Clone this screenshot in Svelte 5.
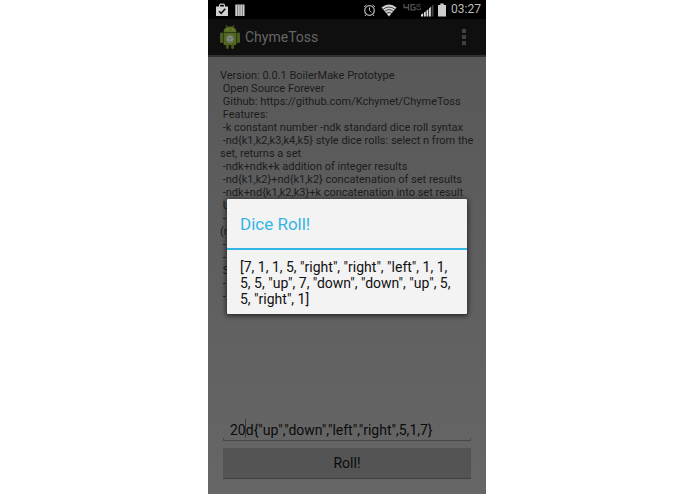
<script>
  let expression = '20d{"up","down","left","right",5,1,7}';
  let open = true;

  const result =
    '[7, 1, 1, 5, "right", "right", "left", 1, 1, 5, 5, "up", 7, "down", "down", "up", 5, 5, "right", 1]';

  const help = [
    "Version: 0.0.1 BoilerMake Prototype",
    " Open Source Forever",
    " Github: https://github.com/Kchymet/ChymeToss",
    " Features:",
    " -k constant number -ndk standard dice roll syntax",
    " -nd{k1,k2,k3,k4,k5} style dice rolls: select n from the set, returns a set",
    " -ndk+ndk+k addition of integer results",
    " -nd{k1,k2}+nd{k1,k2} concatenation of set results",
    " -ndk+nd{k1,k2,k3}+k concatenation into set result",
    " U",
    " -",
    "(r",
    " -",
    " -",
    " S",
    " -",
    " -",
  ].join("\n");

  function roll() {
    open = true;
  }
</script>

<div class="page">
  <div class="phone">
    <div class="status">
      <svg class="bag" width="14" height="14" viewBox="0 0 14 14">
        <path d="M4.5 4V2.8Q4.5 1.2 5.8 1.2H8.2Q9.5 1.2 9.5 2.8V4" fill="none" stroke="#ccc" stroke-width="1.2" />
        <path d="M1 3.5H13V13H1Z" fill="#d0d0d0" />
        <path d="M4 8.2L6.2 10.4L10.3 5.8" fill="none" stroke="#111" stroke-width="1.6" />
      </svg>
      <svg width="10" height="14" viewBox="0 0 10 14">
        <path d="M0.3 1.5H9.5V13H0.3Z" fill="#d0d0d0" />
        <path d="M2.6 1.5V13M5 1.5V13M7.4 1.5V13" stroke="#555" stroke-width="0.7" />
      </svg>
      <span class="fill"></span>
      <svg class="alarm" width="13" height="14" viewBox="0 0 13 14" fill="none" stroke="#b8b8b8">
        <circle cx="6.5" cy="7.5" r="4.8" stroke-width="1.2" />
        <path d="M6.5 4.5V7.5L8.3 9.4M1 4L3.4 1.8M12 4L9.6 1.8M3.2 11.5L2 13M9.8 11.5L11 13" />
      </svg>
      <svg class="wifi" width="16" height="14" viewBox="0 0 16 14">
        <path d="M0.5 4.6Q8 -1.4 15.5 4.6L8 13.4Z" fill="#d4d4d4" />
        <path d="M1.8 6.4Q8 1.6 14.2 6.4M3.4 8.5Q8 4.8 12.6 8.5M5 10.5Q8 8.2 11 10.5" fill="none" stroke="#222" stroke-width="0.8" />
      </svg>
      <svg class="lte" width="18" height="14" viewBox="0 0 18 14" fill="none" stroke="#505050" stroke-width="1.3">
        <path d="M1 1V4.5H5.5M5.5 1V7.5M12 1.6H8V6.8H12V4.3H10.2" />
        <path d="M14 1V3.2H17.5M15.2 1.3H17.5M14 4.5V6.6H17.5V4.5" stroke-width="0.9" />
      </svg>
      <svg class="signal" width="13" height="14" viewBox="0 0 13 14">
        <path d="M0 11.5L2.2 10.3V13.5H0ZM3 9.6L4.8 8.2V13.5H3ZM5.5 7.6L7.3 6.2V13.5H5.5ZM8 5.4L9.8 3.8V13.5H8Z" fill="#ddd" />
        <path d="M10.5 3L12.5 1.2V13.5H10.5Z" fill="#444" />
      </svg>
      <svg class="battery" width="8" height="14" viewBox="0 0 8 14">
        <path d="M2.3 0.5H5.7V2H8V13.5H0V2H2.3Z" fill="#ccc" />
      </svg>
      <span class="clock">03:27</span>
    </div>

    <div class="screen">
      <header>
        <svg class="robot" width="22" height="26" viewBox="0 0 22 26">
          <path d="M7 1L8.4 3.5M15 1L13.6 3.5" stroke="#50611f" stroke-width="1" />
          <path d="M4.5 8Q5 2.5 11 2.5T17.5 8Z" fill="#566b20" />
          <circle cx="8.2" cy="5.7" r="0.6" fill="#888" />
          <circle cx="13.8" cy="5.7" r="0.6" fill="#888" />
          <path d="M4.5 8.4H17.5V19.7Q17.5 21 16.2 21H5.8Q4.5 21 4.5 19.7Z" fill="#526820" />
          <rect x="1" y="8.6" width="3.1" height="10.4" rx="1.3" fill="#495d1c" />
          <rect x="17.9" y="8.6" width="3.1" height="10.4" rx="1.3" fill="#495d1c" />
          <path d="M6.9 20.5H9.9V24Q8.4 26 6.9 24ZM12.1 20.5H15.1V24Q13.6 26 12.1 24Z" fill="#44571a" />
          <circle cx="11" cy="14.7" r="4.2" fill="#6c7560" />
          <path d="M11 11.8L13.7 13.3V16.3L11 17.8L8.3 16.3V13.3Z" fill="#8d9088" />
          <path d="M8.3 13.3L11 14.8L13.7 13.3M11 14.8V17.8" fill="none" stroke="#5c6154" stroke-width="0.8" />
        </svg>
        <h1>ChymeToss</h1>
        <button class="more" aria-label="More options">
          <i></i><i></i><i></i>
        </button>
      </header>

      <p class="help">{help}</p>

      <form on:submit|preventDefault={roll}>
        <div class="field">
          <input type="text" aria-label="Dice expression" bind:value={expression} />
          <span class="caret"></span>
        </div>
        <button class="roll">Roll!</button>
      </form>

      {#if open}
        <div class="overlay">
          <div class="dialog" role="dialog" aria-labelledby="dialog-title">
            <h2 id="dialog-title">Dice Roll!</h2>
            <p>{result}</p>
          </div>
        </div>
      {/if}
    </div>
  </div>
</div>

<style>
  :global(body) {
    background: #fff;
    font-family: Roboto, "Liberation Sans", sans-serif;
  }

  .page {
    display: flex;
    justify-content: center;
    padding-right: 1px;
  }

  .phone {
    display: flex;
    flex-direction: column;
    width: 40vw;
    min-width: 278px;
    min-height: 100vh;
    background: #000;
  }

  .status {
    display: flex;
    align-items: center;
    height: 19px;
    padding: 0 5px 0 7px;
  }

  .bag {
    margin-right: 6px;
  }

  .fill {
    flex: 1;
  }

  .alarm {
    margin-right: 5px;
  }

  .wifi {
    margin-right: 6px;
  }

  .signal {
    margin-right: 4px;
  }

  .battery {
    margin-right: 5px;
  }

  .clock {
    color: #bbb;
    font-size: 12px;
    line-height: 21px;
  }

  .screen {
    position: relative;
    display: flex;
    flex: 1;
    flex-direction: column;
    background: linear-gradient(#575757, #666);
  }

  header {
    display: flex;
    align-items: center;
    height: 36px;
    padding: 0 16px 0 11px;
    background: #0f0f0f;
    border-bottom: 2px solid #303030;
  }

  h1 {
    flex: 1;
    margin: 0 0 0 4px;
    color: #666;
    font-size: 14px;
    font-weight: 400;
    line-height: 20px;
  }

  .more {
    display: flex;
    flex-direction: column;
    gap: 2px;
    padding: 0 4px;
    border: 0;
    background: none;
  }

  .more i {
    width: 4px;
    height: 4px;
    background: #404040;
  }

  .help {
    flex: 1;
    margin: 0;
    padding: 12px 12px 0;
    color: #1c1c1c;
    font-size: 11px;
    line-height: 13px;
    white-space: pre-wrap;
  }

  form {
    display: flex;
    flex-direction: column;
    gap: 7px;
    padding: 0 15px;
    margin-bottom: 15px;
  }

  .field {
    position: relative;
  }

  /* short end ticks of the underline */
  .field::before {
    content: "";
    position: absolute;
    inset: auto 0 0;
    height: 3px;
    border: solid #484848;
    border-width: 0 1px;
  }

  input {
    box-sizing: border-box;
    display: block;
    width: 100%;
    height: 22px;
    padding: 0 7px;
    border: 0;
    border-bottom: 1px solid #484848;
    background: none;
    color: #0b0b0b;
    font-family: inherit;
    font-size: 14px;
    outline: none;
  }

  .caret {
    position: absolute;
    top: 0;
    left: 22px;
    width: 1px;
    height: 19px;
    background: #3a3a3a;
  }

  .roll {
    height: 31px;
    padding: 0;
    border: 0;
    border-bottom: 1px solid #404040;
    background: #545454;
    color: #0b0b0b;
    font-family: inherit;
    font-size: 14px;
  }

  .overlay {
    position: absolute;
    inset: 0;
    display: flex;
    align-items: center;
    padding: 0 19px;
  }

  .dialog {
    flex: 1;
    border-radius: 1px;
    background: #f3f3f3;
    box-shadow: 0 1px 5px 1px rgba(0, 0, 0, 0.6);
  }

  h2 {
    margin: 0;
    padding: 2px 13px 0;
    border-bottom: 2px solid #33b5e5;
    color: #33b5e5;
    font-size: 17px;
    font-weight: 400;
    line-height: 47px;
  }

  .dialog p {
    margin: 0;
    padding: 9px 12px 7px 13px;
    color: #111;
    font-size: 14px;
    line-height: 16px;
  }
</style>
